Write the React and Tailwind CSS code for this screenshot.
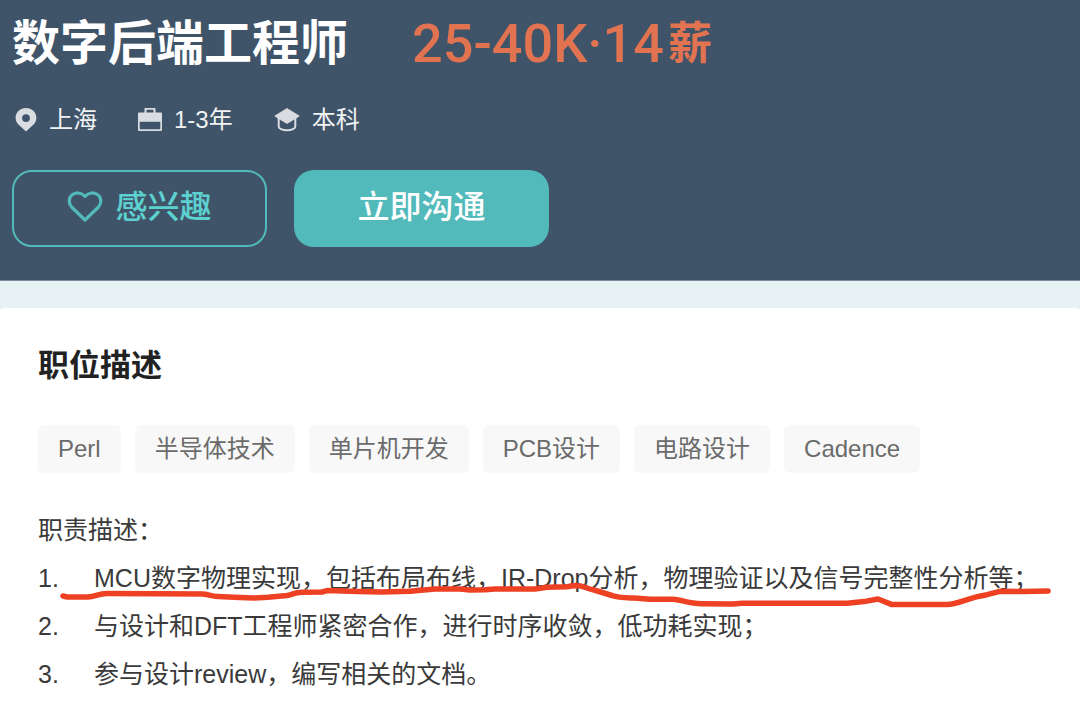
const SANS = "font-['Liberation_Sans','Noto_Sans_CJK_SC',sans-serif]";

function PinIcon() {
  return (
    <svg className="h-6 w-[22px]" viewBox="0 0 22 24" aria-hidden="true">
      <path
        fill="#d9dce1"
        fillRule="evenodd"
        d="M11 0C5.200 0 .6 4.300.6 9.900c0 3.300 1.700 5.500 3.900 7.600L11 23.500l6.500-6c2.200-2.100 3.900-4.300 3.900-7.600C21.400 4.300 16.800 0 11 0Zm0 6.200a3.900 3.900 0 1 1 0 7.800 3.900 3.900 0 0 1 0-7.800Z"
      />
    </svg>
  );
}

function CaseIcon() {
  return (
    <svg className="h-6 w-6" viewBox="0 0 24 24" aria-hidden="true">
      <path
        fill="#d9dce1"
        fillRule="evenodd"
        d="M6.500 0h11v4.500H23a1 1 0 0 1 1 1V22a1 1 0 0 1-1 1H1a1 1 0 0 1-1-1V5.500a1 1 0 0 1 1-1h5.500V0Zm2 1.700v2.800h7V1.700h-7ZM1.700 13.700v7.500h20.600v-7.500H1.700Z"
      />
    </svg>
  );
}

function CapIcon() {
  return (
    <svg className="h-6 w-[26px]" viewBox="0 0 26 24" aria-hidden="true">
      <path fill="#d9dce1" d="M13 .5 25.200 7.900 22 10.200 13 15.500 4 10.200.8 7.900Z" stroke="#d9dce1" strokeWidth=".8" strokeLinejoin="round" />
      <path fill="none" stroke="#d9dce1" strokeWidth="2" d="M4.700 9.700V18.500c0 2 3.500 3.800 8.300 3.800s8.300-1.800 8.300-3.800V9.700" />
    </svg>
  );
}

function HeartIcon() {
  return (
    <svg className="h-8 w-9" viewBox="0 0 36 32" aria-hidden="true">
      <path
        fill="none"
        stroke="#53babb"
        strokeWidth="3.200"
        strokeLinejoin="round"
        d="M18 29 5 16.500C1.300 12.700 1.400 7 4.800 4.100 8.500.9 14.200 1.300 18 5.300c3.800-4 9.500-4.400 13.200-1.200 3.400 2.900 3.500 8.600-.2 12.400Z"
      />
    </svg>
  );
}

function Underline() {
  return (
    <svg className="pointer-events-none absolute top-7 left-5 h-7 w-[1000px]" viewBox="0 0 1000 28" aria-hidden="true">
      <path
        fill="none"
        stroke="#ee4023"
        strokeWidth="5.500"
        strokeLinecap="round"
        strokeLinejoin="round"
        d="M5 14 9 15H30C37 15 40 11.500 49 11.500L145 12C153 13 153 14.500 160 14.500L182 15.500 196 16 210 15.300 229 13.500C236 12.500 235 10.500 244 10.200L264 10 269 8.600 300 9.600 324 10 352 9.300 377 7H402L412 8 427 7.800 437 7H477L489 5.300 509 4.700 517 3.500C527 3.500 526 6 536 8L554 13.500C560 15.600 566 15.600 576 16L592 17.200H615C622 17.200 630 21.700 644 21.800L675 22 684 21.300H789L806 19.600 820 17 834 22.600H889C901 22 910 15.500 929 12.700L942 9.300 966 9.600 990 9"
      />
    </svg>
  );
}

const meta = [
  { icon: <PinIcon />, text: "上海" },
  { icon: <CaseIcon />, text: "1-3年" },
  { icon: <CapIcon />, text: "本科" },
];

const tags = ["Perl", "半导体技术", "单片机开发", "PCB设计", "电路设计", "Cadence"];

const duties = [
  "MCU数字物理实现，包括布局布线，IR-Drop分析，物理验证以及信号完整性分析等；",
  "与设计和DFT工程师紧密合作，进行时序收敛，低功耗实现；",
  "参与设计review，编写相关的文档。",
];

export default function App() {
  return (
    <main lang="zh-CN" className={`min-h-screen bg-[#e7f2f4] ${SANS}`}>
      <header className="border-b border-[#7b8a9a] bg-[#3f5469] px-3 pt-3 pb-[33px]">
        <div className="flex h-16 items-center gap-16 whitespace-nowrap">
          <h1 className="text-5xl leading-[64px] font-bold text-white">数字后端工程师</h1>
          <p className="flex items-center gap-1 font-['Roboto','Noto_Sans_CJK_SC',sans-serif] leading-[64px] text-[#e27351]">
            <span className="text-[54px] font-medium">25-40K·14</span>
            <span className="text-[44px] font-bold">薪</span>
          </p>
        </div>
        <ul className="mt-[26px] flex h-9 items-center gap-[41px] pl-[3px] text-2xl text-[#f0f2f4]">
          {meta.map((m) => (
            <li key={m.text} className="flex items-center gap-3">
              {m.icon}
              <span>{m.text}</span>
            </li>
          ))}
        </ul>
        <div className="mt-8 flex flex-wrap gap-[27px] text-[32px] font-medium">
          <button type="button" className="flex h-[77px] w-[255px] items-center justify-center gap-3 rounded-[20px] border-2 border-[#53babb] pb-1 text-[#5dd0d0]">
            <HeartIcon />
            感兴趣
          </button>
          <button type="button" className="flex h-[77px] w-[255px] items-center justify-center rounded-[20px] bg-[#53babb] pb-1 text-white">
            立即沟通
          </button>
        </div>
      </header>
      <section className="mt-[27px] min-h-[397px] rounded-t-[4px] bg-white px-[38px] pt-[34px]">
        <h2 className="text-[31px] leading-[48px] font-bold text-[#222222]">职位描述</h2>
        <ul className="mt-[35px] flex flex-wrap gap-[14px] text-2xl text-[#6b6b6b]">
          {tags.map((t) => (
            <li key={t} className="flex h-12 items-center rounded-md bg-[#f8f8f8] px-5">
              {t}
            </li>
          ))}
        </ul>
        <div className="mt-[33px] text-[25px] leading-[48px] text-[#3a3a3a]">
          <p>职责描述：</p>
          <ol>
            {duties.map((d, i) => (
              <li key={d} className="relative flex whitespace-nowrap">
                <span className="w-14 shrink-0">{i + 1}.</span>
                <span>{d}</span>
                {i === 0 && <Underline />}
              </li>
            ))}
          </ol>
        </div>
      </section>
    </main>
  );
}
